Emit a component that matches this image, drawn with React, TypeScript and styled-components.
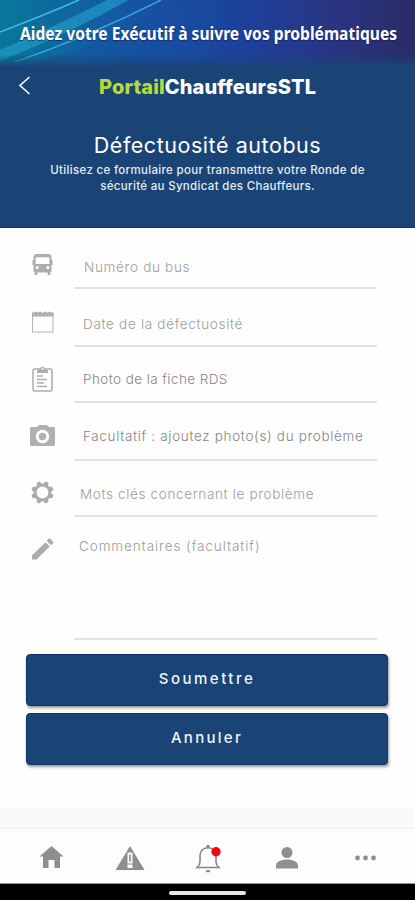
import React from 'react';
import styled, { createGlobalStyle } from 'styled-components';

const GlobalStyle = createGlobalStyle`
  *, *::before, *::after { box-sizing: border-box; }
  html, body { margin: 0; padding: 0; background: #fff; }
  body { font-family: Inter, "Open Sans", sans-serif; }
  h1, h2, p { margin: 0; font-weight: 400; }
  svg { display: block; }
`;

const Screen = styled.div`
  width: 415px;
  height: 900px;
  display: flex;
  flex-direction: column;
  overflow: hidden;
  background: #fefefe;
`;

const Top = styled.header`
  position: relative;
  height: 228px;
  flex: none;
  display: flex;
  flex-direction: column;
  background: #1a4476;
  border-bottom: 1px solid #08346c;
`;

const Backdrop = styled.svg`
  position: absolute;
  inset: 0;
`;

const Banner = styled.h1`
  position: relative;
  height: 66px;
  padding-left: 20px;
  font: 700 18px/66px "Noto Sans", sans-serif;
  color: #fff;
  white-space: nowrap;
  text-shadow: 0 1px 1px rgba(10, 20, 90, 0.6);
`;

const Stretch = styled.span<{ $scale: number }>`
  display: inline-block;
  white-space: nowrap;
  transform: scaleX(${p => p.$scale});
  transform-origin: 0 50%;
`;

const AppBar = styled.div`
  position: relative;
  height: 42px;
  display: flex;
  align-items: center;
  padding-left: 17px;
`;

const Brand = styled.div`
  margin-left: 66px;
  font-size: 20px;
  line-height: 28px;
  font-weight: 800;
  letter-spacing: 0.12px;
  color: #fff;
  white-space: nowrap;
  b { color: #b5db38; font-weight: 800; }
`;

const Intro = styled.div`
  position: relative;
  padding-top: 23px;
  text-align: center;
  color: #fff;
`;

const Title = styled.h2`
  font-size: 21.5px;
  line-height: 28px;
  letter-spacing: 0.55px;
  margin-bottom: 3px;
`;

const Subtitle = styled.p`
  font-size: 11.5px;
  line-height: 16px;
  font-weight: 500;
  letter-spacing: 0.32px;
  color: #e6ecf3;
  white-space: nowrap;
`;

const Form = styled.main`
  height: 412px;
  display: grid;
  grid-template-rows: 61px 58px 56px 58px 56px 123px;
`;

const Field = styled.label`
  display: grid;
  grid-template-columns: 74px 303px;
`;

const FieldIcon = styled.span<{ $top: number }>`
  padding: ${p => p.$top}px 0 0 28px;
`;

const FieldLabel = styled.span<{ $top: number; $left: number; $spacing: number; $dark?: boolean }>`
  border-bottom: 2px solid #e1e1e1;
  padding: ${p => p.$top}px 0 0 ${p => p.$left}px;
  font-size: 13.5px;
  line-height: 20px;
  font-weight: 300;
  letter-spacing: ${p => p.$spacing}px;
  color: ${p => (p.$dark ? '#858585' : '#9c9c9c')};
  white-space: nowrap;
`;

const Actions = styled.div`
  padding: 14px 27px 0 26px;
  display: grid;
  gap: 7px;
`;

const Action = styled.button<{ $spacing: number }>`
  height: 52px;
  border: 1px solid #0c346c;
  border-radius: 4px;
  background: #1a4476;
  box-shadow: 1px 2px 3px rgba(0, 0, 0, 0.4);
  color: #f1f5fc;
  font: 500 15px/20px Inter, sans-serif;
  letter-spacing: ${p => p.$spacing}px;
  padding: 0 0 2px;
`;

const Strip = styled.div`
  height: 22px;
  margin-top: auto;
  background: #fafafa;
  border-bottom: 1px solid #f0f0f0;
`;

const TabBar = styled.nav`
  height: 55px;
  flex: none;
  display: grid;
  grid-template-columns: repeat(5, 78.5px);
  padding: 0 0 0 12px;
  background: #fdfdfd;
  border-bottom: 1px solid #999;
`;

const Tab = styled.a`
  display: flex;
  justify-content: center;
  padding-top: 13px;
`;

const SystemBar = styled.div`
  height: 16px;
  flex: none;
  display: flex;
  justify-content: center;
  padding-top: 7px;
  background: #000;
`;

const Handle = styled.div`
  width: 77px;
  height: 4px;
  border-radius: 2px;
  background: #e8e8e8;
`;

const GREY = '#acacac';

const BusIcon = () => (
  <svg width="28" height="28" viewBox="0 0 28 28" fill={GREY}>
    <path fillRule="evenodd" d="M8.500 2h12c2 0 3 1.500 3 3.500v2.500h1v5h-1v5.500c0 .8-.5 1.500-1.200 1.700V23h-2.600v-2.500H9.300V23H6.700v-2.800c-.7-.2-1.200-.9-1.200-1.700V13h-1V8h1V5.500C5.500 3.500 6.500 2 8.500 2zM8.500 5.200c-.5 0-.9.3-.9.8V12h13.800V6c0-.5-.4-.8-.9-.8zM9.200 14a1.600 1.600 0 1 0 .01 0zM19.800 14a1.600 1.600 0 1 0 .01 0z" />
  </svg>
);

const CalendarIcon = () => (
  <svg width="28" height="28" viewBox="0 0 28 28" fill="none" stroke="#b4b4b4">
    <rect x="4.500" y="5" width="20.500" height="18" strokeWidth="1" />
    <path d="M4 5.500h21.500" stroke="#ababab" strokeWidth="4" />
    <path d="M8 2.800v2M12 2.800v2M17 2.800v2M21.500 2.800v2" stroke="#ababab" strokeWidth="2" />
    <path d="M5 5.500h19.500" stroke="#c0c0c0" strokeDasharray="2 2" />
  </svg>
);

const ClipboardIcon = () => (
  <svg width="28" height="30" viewBox="0 0 28 30" fill="none" stroke={GREY} strokeWidth="1.500">
    <rect x="5" y="4" width="19" height="22" rx="1.500" />
    <path fill={GREY} stroke="none" d="M9 8V5.500l3-1.500c0-3 5-3 5 0l3 1.500V8z" />
    <circle cx="14.500" cy="3.800" r="1" fill="#fff" stroke="none" />
    <path d="M9 11h6M9 14.500h10M9 18h7M9 21.500h10" />
  </svg>
);

const CameraIcon = () => (
  <svg width="30" height="28" viewBox="0 0 30 28">
    <path fill="#b0b0b0" d="M4 4h5l2-2h8l2 2h4c1.500 0 2 .6 2 2v15c0 1.500-.6 2-2 2H4c-1.500 0-2-.6-2-2V6c0-1.400.6-2 2-2z" />
    <circle cx="14.500" cy="13.500" r="6.700" fill="#fff" />
    <circle cx="14.500" cy="13.500" r="3.700" fill="#b0b0b0" />
  </svg>
);

const GearIcon = () => (
  <svg width="28" height="28" viewBox="0 0 28 28" fill="none" stroke={GREY}>
    <circle cx="14.500" cy="13.500" r="7.300" strokeWidth="2.800" />
    {[22.5, 67.5, 112.5, 157.5, 202.5, 247.5, 292.5, 337.5].map(a => (
      <path key={a} fill={GREY} stroke="none" transform={`rotate(${a} 14.5 13.5)`} d="M11.500 6l1.300-3.700h3.400l1.300 3.700z" />
    ))}
  </svg>
);

const PencilIcon = () => (
  <svg width="28" height="28" viewBox="0 0 28 28" fill={GREY}>
    <path d="M4 19.500L17.500 6.200l4.200 4.200L8.500 23.500H4zM18.700 5l2-2c.7-.7 1.200-.6 1.800 0l2.500 2.500c.6.6.6 1.100 0 1.700l-2 2z" />
  </svg>
);

const fields = [
  { text: 'Numéro du bus', icon: <BusIcon />, iconTop: 24, top: 29, left: 10, spacing: 0.7 },
  { text: 'Date de la défectuosité', icon: <CalendarIcon />, iconTop: 20, top: 25, left: 9, spacing: 0.69 },
  { text: 'Photo de la fiche RDS', icon: <ClipboardIcon />, iconTop: 18, top: 22, left: 9, spacing: 0.42, dark: true },
  { text: 'Facultatif : ajoutez photo(s) du problème', icon: <CameraIcon />, iconTop: 20, top: 23, left: 9, spacing: 0.66, dark: true },
  { text: 'Mots clés concernant le problème', icon: <GearIcon />, iconTop: 18, top: 23, left: 6, spacing: 0.65 },
  { text: 'Commentaires (facultatif)', icon: <PencilIcon />, iconTop: 19, top: 19, left: 5, spacing: 0.92 },
];

export default function App() {
  return (
    <>
      <GlobalStyle />
      <Screen>
        <Top>
          <Backdrop width="415" height="80" viewBox="0 0 415 80">
            <defs>
              <linearGradient id="sky" x1="0" y1="0" x2="1" y2="0">
                <stop offset="0" stopColor="#087799" />
                <stop offset=".18" stopColor="#10649f" />
                <stop offset=".36" stopColor="#1850a2" />
                <stop offset=".6" stopColor="#1d409a" />
                <stop offset=".8" stopColor="#293582" />
                <stop offset="1" stopColor="#292b68" />
              </linearGradient>
              <linearGradient id="fade" x1="0" y1="0" x2="0" y2="1">
                <stop offset="0" stopColor="#1a4476" stopOpacity="0" />
                <stop offset="1" stopColor="#1a4476" />
              </linearGradient>
            </defs>
            <rect width="415" height="66" fill="url(#sky)" />
            <path d="M22 66C90 48 130 30 185 0h40l-20 66z" fill="#174e9f" opacity=".4" />
            <path d="M0 50Q58 25 107 0h22Q66 35 0 61z" fill="#22a5cf" opacity=".6" />
            <path d="M0 32Q42 16 79 0" stroke="#3dbbe0" strokeWidth="1.600" fill="none" />
            <path d="M15 62Q90 36 161 0" stroke="#3a9fe0" strokeWidth="1.600" fill="none" />
            <rect y="54" width="415" height="14" fill="url(#fade)" />
          </Backdrop>
          <Banner><Stretch $scale={0.867}>Aidez votre Exécutif à suivre vos problématiques</Stretch></Banner>
          <AppBar>
            <svg width="16" height="22" viewBox="0 0 16 22" fill="none" stroke="#fff" strokeWidth="1.600">
              <path d="M12.500 1L3 9.500l9.500 8.500" />
            </svg>
            <Brand><b>Portail</b>ChauffeursSTL</Brand>
          </AppBar>
          <Intro>
            <Title>Défectuosité autobus</Title>
            <Subtitle>Utilisez ce formulaire pour transmettre votre Ronde de</Subtitle>
            <Subtitle>sécurité au Syndicat des Chauffeurs.</Subtitle>
          </Intro>
        </Top>
        <Form>
          {fields.map(f => (
            <Field key={f.text}>
              <FieldIcon $top={f.iconTop}>{f.icon}</FieldIcon>
              <FieldLabel $top={f.top} $left={f.left} $spacing={f.spacing} $dark={f.dark}>{f.text}</FieldLabel>
            </Field>
          ))}
        </Form>
        <Actions>
          <Action type="button" $spacing={2.5}>Soumettre</Action>
          <Action type="button" $spacing={2.3}>Annuler</Action>
        </Actions>
        <Strip />
        <TabBar>
          <Tab>
            <svg width="30" height="32" viewBox="0 0 30 32" fill="#8f8f8f">
              <path d="M15.500 4l12 10.500H24V26h-5.500v-8h-6v8H7V14.500H3.500z" />
            </svg>
          </Tab>
          <Tab>
            <svg width="30" height="32" viewBox="0 0 30 32">
              <path fill="#8f8f8f" d="M15 4l14.500 24h-29z" />
              <path fill="#fff" d="M12.500 10.500h5v11h-5zM12.500 22.500h5v3.500h-5z" />
              <path fill="#8f8f8f" d="M14.200 12.500h1.600v7h-1.600z" />
            </svg>
          </Tab>
          <Tab>
            <svg width="30" height="32" viewBox="0 0 30 32" fill="none" stroke="#858585" strokeWidth="1.600">
              <path d="M4 25.500h22c-2-1.600-3-3-3-5.500v-6c0-5-3-8.300-8-8.300S7 9 7 14v6c0 2.500-1 3.900-3 5.500z" />
              <circle cx="15" cy="4.300" r="1.600" fill="#858585" stroke="none" />
              <path d="M13 29.200h4" strokeWidth="2" />
              <circle cx="23" cy="9.800" r="4.700" fill="#f9030d" stroke="none" />
            </svg>
          </Tab>
          <Tab>
            <svg width="30" height="32" viewBox="0 0 30 32" fill="#8f8f8f">
              <circle cx="15" cy="10.500" r="5.500" />
              <path d="M4 26.500v-3c0-3.800 5.500-6 11-6s11 2.200 11 6v3z" />
            </svg>
          </Tab>
          <Tab>
            <svg width="30" height="32" viewBox="0 0 30 32" fill="#8f8f8f">
              <circle cx="7.500" cy="16" r="2.400" /><circle cx="15.500" cy="16" r="2.400" /><circle cx="23.500" cy="16" r="2.400" />
            </svg>
          </Tab>
        </TabBar>
        <SystemBar><Handle /></SystemBar>
      </Screen>
    </>
  );
}
